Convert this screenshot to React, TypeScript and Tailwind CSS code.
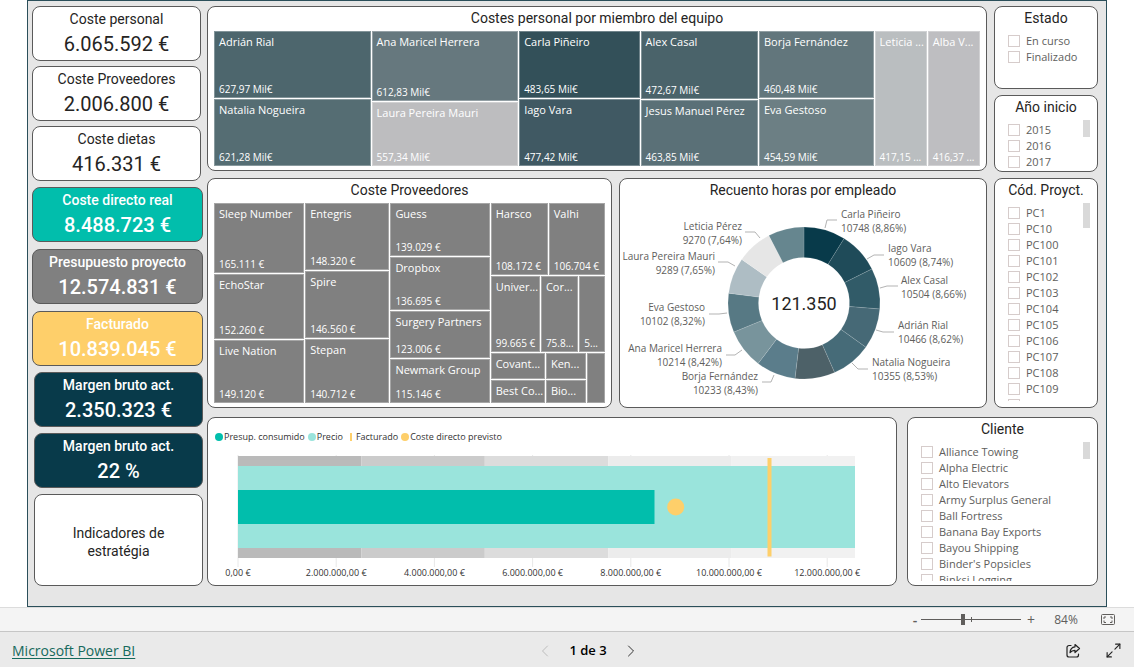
import type { ReactNode } from 'react';
import clsx from 'clsx';
import { ChevronLeft, ChevronRight, Maximize2 } from 'lucide-react';

interface Leaf {
  name?: string;
  label?: string;
  value: number;
  color?: string;
}

interface Branch {
  dir: 'row' | 'col';
  items: TreeNode[];
}

type TreeNode = Leaf | Branch;

const personal: Branch = {
  dir: 'row',
  items: [
    {
      dir: 'col',
      items: [
        { name: 'Adrián Rial', label: '627,97 Mil€', value: 627.97, color: '#4d666d' },
        { name: 'Natalia Nogueira', label: '621,28 Mil€', value: 621.28, color: '#556d73' },
      ],
    },
    {
      dir: 'col',
      items: [
        { name: 'Ana Maricel Herrera', label: '612,83 Mil€', value: 612.83, color: '#66787e' },
        { name: 'Laura Pereira Mauri', label: '557,34 Mil€', value: 557.34, color: '#bdbdbf' },
      ],
    },
    {
      dir: 'col',
      items: [
        { name: 'Carla Piñeiro', label: '483,65 Mil€', value: 483.65, color: '#335059' },
        { name: 'Iago Vara', label: '477,42 Mil€', value: 477.42, color: '#405963' },
      ],
    },
    {
      dir: 'col',
      items: [
        { name: 'Alex Casal', label: '472,67 Mil€', value: 472.67, color: '#4a636a' },
        { name: 'Jesus Manuel Pérez', label: '463,85 Mil€', value: 463.85, color: '#5a7077' },
      ],
    },
    {
      dir: 'col',
      items: [
        { name: 'Borja Fernández', label: '460,48 Mil€', value: 460.48, color: '#62767c' },
        { name: 'Eva Gestoso', label: '454,59 Mil€', value: 454.59, color: '#6c7f84' },
      ],
    },
    { name: 'Leticia ...', label: '417,15 ...', value: 417.15, color: '#babec0' },
    { name: 'Alba V...', label: '416,37 ...', value: 416.37, color: '#bebec1' },
  ],
};

const proveedores: Branch = {
  dir: 'row',
  items: [
    {
      dir: 'col',
      items: [
        { name: 'Sleep Number', label: '165.111 €', value: 165.1 },
        { name: 'EchoStar', label: '152.260 €', value: 152.3 },
        { name: 'Live Nation', label: '149.120 €', value: 149.1 },
      ],
    },
    {
      dir: 'col',
      items: [
        { name: 'Entegris', label: '148.320 €', value: 148.3 },
        { name: 'Spire', label: '146.560 €', value: 146.6 },
        { name: 'Stepan', label: '140.712 €', value: 140.7 },
      ],
    },
    {
      dir: 'col',
      items: [
        { name: 'Guess', label: '139.029 €', value: 139 },
        { name: 'Dropbox', label: '136.695 €', value: 136.7 },
        { name: 'Surgery Partners', label: '123.006 €', value: 123 },
        { name: 'Newmark Group', label: '115.146 €', value: 115.1 },
      ],
    },
    {
      dir: 'col',
      items: [
        {
          dir: 'row',
          items: [
            { name: 'Harsco', label: '108.172 €', value: 108.2 },
            { name: 'Valhi', label: '106.704 €', value: 106.7 },
          ],
        },
        {
          dir: 'row',
          items: [
            { name: 'Univer...', label: '99.665 €', value: 99.7 },
            { name: 'Cor...', label: '75.8...', value: 75.8 },
            { label: '5...', value: 52 },
          ],
        },
        {
          dir: 'row',
          items: [
            {
              dir: 'col',
              items: [
                { name: 'Covant...', value: 38 },
                { name: 'Best Co...', value: 34 },
              ],
            },
            {
              dir: 'col',
              items: [
                { name: 'Ken...', value: 28 },
                { name: 'Bio...', value: 25 },
              ],
            },
            { value: 24 },
          ],
        },
      ],
    },
  ],
};

const plainCards = [
  { title: 'Coste personal', value: '6.065.592 €' },
  { title: 'Coste Proveedores', value: '2.006.800 €' },
  { title: 'Coste dietas', value: '416.331 €' },
];

const projectCards = [
  { title: 'Coste directo real', value: '8.488.723 €', tone: 'bg-[#01beac] text-white' },
  { title: 'Presupuesto proyecto', value: '12.574.831 €', tone: 'bg-[#808080] text-white' },
  { title: 'Facturado', value: '10.839.045 €', tone: 'bg-[#fecf6a] text-white' },
];

const marginCards = [
  { title: 'Margen bruto act.', value: '2.350.323 €', tone: 'bg-[#083a4a] text-white' },
  { title: 'Margen bruto act.', value: '22 %', tone: 'bg-[#083a4a] text-white' },
];

const slices = [
  { value: 10748, color: '#083a4a' },
  { value: 10609, color: '#1f4b59' },
  { value: 10504, color: '#315b68' },
  { value: 10466, color: '#466976' },
  { value: 10355, color: '#466b78' },
  { value: 10290, color: '#4d6168' },
  { value: 10233, color: '#5b7d8b' },
  { value: 10214, color: '#78949c' },
  { value: 10102, color: '#577984' },
  { value: 9289, color: '#aebdc4' },
  { value: 9270, color: '#e6e6e6' },
  { value: 9270, color: '#66868f' },
];

interface Callout {
  name: string;
  detail: string;
  x: number;
  y: number;
  end?: boolean;
  line: string;
}

const callouts: Callout[] = [
  { name: 'Carla Piñeiro', detail: '10748 (8,86%)', x: 221, y: 15, line: '205,25 207,17 217,17' },
  { name: 'Iago Vara', detail: '10609 (8,74%)', x: 268, y: 49, line: '247,56 254,52 264,52' },
  { name: 'Alex Casal', detail: '10504 (8,66%)', x: 281, y: 81, line: '260,85 267,83 278,83' },
  { name: 'Adrián Rial', detail: '10466 (8,62%)', x: 278, y: 126, line: '256,127 263,129 274,129' },
  { name: 'Natalia Nogueira', detail: '10355 (8,53%)', x: 252, y: 163, line: '232,160 238,166 248,166' },
  { name: 'Borja Fernández', detail: '10233 (8,43%)', x: 138, y: 177, end: true, line: '142,179 151,179 154,172' },
  { name: 'Ana Maricel Herrera', detail: '10214 (8,42%)', x: 102, y: 149, end: true, line: '106,152 115,152 122,147' },
  { name: 'Eva Gestoso', detail: '10102 (8,32%)', x: 85, y: 108, end: true, line: '89,111 99,111 107,110' },
  { name: 'Laura Pereira Mauri', detail: '9289 (7,65%)', x: 95, y: 57, end: true, line: '98,59 108,59 115,63' },
  { name: 'Leticia Pérez', detail: '9270 (7,64%)', x: 122, y: 27, end: true, line: '125,29 135,29 140,35' },
];

const bands = ['#bababa', '#cbcbcb', '#dcdcdc', '#ececec', '#f1f1f1'];

const ticks = [
  '0,00 €',
  '2.000.000,00 €',
  '4.000.000,00 €',
  '6.000.000,00 €',
  '8.000.000,00 €',
  '10.000.000,00 €',
  '12.000.000,00 €',
];

const estados = ['En curso', 'Finalizado'];
const anios = ['2015', '2016', '2017'];
const proyectos = [
  'PC1', 'PC10', 'PC100', 'PC101', 'PC102', 'PC103', 'PC104',
  'PC105', 'PC106', 'PC107', 'PC108', 'PC109', 'PC11',
];
const clientes = [
  'Alliance Towing',
  'Alpha Electric',
  'Alto Elevators',
  'Army Surplus General',
  'Ball Fortress',
  'Banana Bay Exports',
  'Bayou Shipping',
  "Binder's Popsicles",
  'Binksi Logging',
];

function total(node: TreeNode): number {
  return 'items' in node ? node.items.reduce((sum, n) => sum + total(n), 0) : node.value;
}

function Treemap({ node }: { node: TreeNode }) {
  const style = { flexGrow: total(node) };
  if ('items' in node) {
    return (
      <div
        className={clsx('flex min-h-0 min-w-0 basis-0 gap-px', node.dir === 'col' && 'flex-col')}
        style={style}
      >
        {node.items.map((n, i) => (
          <Treemap key={i} node={n} />
        ))}
      </div>
    );
  }
  // padding sits on the inner box so that it does not add to the flex share
  return (
    <div className="flex min-h-0 min-w-0 basis-0 bg-[#808080]" style={{ ...style, backgroundColor: node.color }}>
      <div className="flex min-w-0 flex-1 flex-col justify-between border border-white/30 pl-1 whitespace-nowrap text-white">
        {node.name ? <p className="pt-0.5 text-[11px] leading-4">{node.name}</p> : <span />}
        {node.label && <p className="text-[10px] leading-4">{node.label}</p>}
      </div>
    </div>
  );
}

function Panel({ title, className, children }: { title?: string; className?: string; children: ReactNode }) {
  return (
    <section className={clsx('flex min-w-0 flex-col rounded-lg border border-[#5a5a5a] bg-white', className)}>
      {title && (
        <h2 className="pb-0.5 text-center font-['Roboto',sans-serif] text-sm leading-[22px] text-[#252423]">
          {title}
        </h2>
      )}
      {children}
    </section>
  );
}

function Card({ title, value, tone }: { title: string; value: string; tone?: string }) {
  return (
    <div
      className={clsx(
        "rounded-lg border border-[#5a5a5a] pt-0.5 text-center font-['Roboto',sans-serif]",
        tone ? [tone, 'font-medium'] : 'bg-white text-[#252423]',
      )}
    >
      <p className="text-sm leading-5">{title}</p>
      <p className="text-xl leading-[31px]">{value}</p>
    </div>
  );
}

function Slicer({ title, options, list, thumb }: { title: string; options: string[]; list: string; thumb?: string }) {
  return (
    <Panel title={title}>
      <div className="flex pr-[7px] pl-[13px]">
        <ul className={clsx('min-w-0 flex-1 overflow-hidden pt-0.5', list)}>
          {options.map((o) => (
            <li key={o}>
              <label className="flex h-4 items-center gap-1.5 text-[11px] whitespace-nowrap text-[#605e5c]">
                <input
                  type="checkbox"
                  className="size-3 shrink-0 appearance-none border border-[#d6cccb] bg-white checked:bg-[#605e5c]"
                />
                {o}
              </label>
            </li>
          ))}
        </ul>
        {thumb && <div className={clsx('w-[7px] bg-[#d9d9d9]', thumb)} />}
      </div>
    </Panel>
  );
}

function Donut() {
  const cx = 184;
  const cy = 100;
  const sum = slices.reduce((s, d) => s + d.value, 0);
  const point = (r: number, a: number) => `${cx + r * Math.sin(a)} ${cy - r * Math.cos(a)}`;
  let angle = 0;

  return (
    <svg viewBox="0 0 366 200" className="w-full font-['Open_Sans',sans-serif]">
      {slices.map((s, i) => {
        const from = angle;
        const to = from + (s.value / sum) * Math.PI * 2;
        angle = to;
        return (
          <path
            key={i}
            d={`M${point(76, from)} A76 76 0 0 1 ${point(76, to)} L${point(45.5, to)} A45.5 45.5 0 0 0 ${point(45.5, from)}Z`}
            fill={s.color}
            stroke="#fff"
            strokeOpacity=".25"
            strokeWidth=".5"
          />
        );
      })}
      {callouts.map((c) => (
        <g key={c.name}>
          <polyline points={c.line} fill="none" stroke="#b3b3b3" />
          <text fontSize="10" fill="#605e5c" textAnchor={c.end ? 'end' : 'start'}>
            <tspan x={c.x} y={c.y}>{c.name}</tspan>
            <tspan x={c.x} y={c.y + 14}>{c.detail}</tspan>
          </text>
        </g>
      ))}
      <text x={cx} y={cy + 7} textAnchor="middle" className="fill-[#252423] font-['Roboto',sans-serif] text-[18px]">
        121.350
      </text>
    </svg>
  );
}

function BulletChart() {
  return (
    <svg viewBox="0 0 688 138" className="w-full font-['Open_Sans',sans-serif]">
      {ticks.map((t, i) => (
        <g key={t}>
          <path d={`M${30 + i * 98.2} 9V121`} stroke="#e8e8e8" />
          <text x={30 + i * 98.2} y="130" textAnchor="middle" fontSize="9" fill="#333">
            {t}
          </text>
        </g>
      ))}
      {bands.map((color, i) => (
        <rect key={color} x={30 + i * 123.4} y="10" width="123.4" height="102" fill={color} />
      ))}
      <rect x="30" y="20" width="617" height="82" fill="#9ae4dc" />
      <rect x="30" y="44" width="416.5" height="34" fill="#01beac" />
      <circle cx="467.7" cy="61" r="8.5" fill="#fecf6a" />
      <rect x="559.5" y="12" width="4" height="98.5" fill="#fecf6a" />
    </svg>
  );
}

function Legend() {
  return (
    <ul className="flex items-center gap-[3px] px-[7px] pt-[11px] pb-px text-[9px] leading-4 text-[#333]">
      <li className="flex items-center gap-px">
        <span className="size-2 rounded-full bg-[#01beac]" />
        Presup. consumido
      </li>
      <li className="flex items-center gap-px">
        <span className="size-2 rounded-full bg-[#9ae4dc]" />
        Precio
      </li>
      <li className="flex items-center gap-1 pl-1">
        <span className="h-2 w-0.5 bg-[#fecf6a]" />
        Facturado
      </li>
      <li className="flex items-center gap-px">
        <span className="size-2 rounded-full bg-[#fecf6a]" />
        Coste directo previsto
      </li>
    </ul>
  );
}

function Sidebar() {
  return (
    <aside className="flex w-[171px] shrink-0 flex-col gap-1.5">
      <div className="flex flex-col gap-[5px] pr-0.5">
        {plainCards.map((c) => (
          <Card key={c.title} {...c} />
        ))}
      </div>
      <div className="flex flex-col gap-[7px]">
        {projectCards.map((c) => (
          <Card key={c.title} {...c} />
        ))}
      </div>
      <div className="flex flex-1 flex-col gap-1.5 pl-0.5">
        {marginCards.map((c) => (
          <Card key={c.value} {...c} />
        ))}
        <button
          type="button"
          className="flex-1 rounded-lg border border-[#5a5a5a] bg-white px-6 pt-1 font-['Roboto',sans-serif] text-sm leading-[18px] text-[#252423]"
        >
          Indicadores de estratégia
        </button>
      </div>
    </aside>
  );
}

function ZoomBar() {
  return (
    <div className="flex h-6 items-center justify-end border-t border-[#dcdcdc] bg-[#f4f4f4] pr-[19px] text-[#605e5c]">
      <button type="button" aria-label="Alejar" className="w-3 text-sm leading-none font-semibold">
        -
      </button>
      <div className="relative flex w-[100px] items-center">
        <input
          type="range"
          aria-label="Zoom"
          min={0}
          max={200}
          defaultValue={84}
          className="h-px w-full appearance-none bg-[#605e5c] [&::-webkit-slider-thumb]:h-[11px] [&::-webkit-slider-thumb]:w-1 [&::-webkit-slider-thumb]:appearance-none [&::-webkit-slider-thumb]:bg-[#605e5c]"
        />
        <span className="absolute left-1/2 h-[5px] w-px bg-[#605e5c]" />
      </div>
      <button type="button" aria-label="Acercar" className="w-5 text-sm leading-none">
        +
      </button>
      <span className="w-[50px] text-center text-xs">84%</span>
      <button type="button" aria-label="Ajustar a la página" className="ml-2.5">
        <svg viewBox="0 0 14 11" className="h-[11px] w-3.5" fill="none" stroke="currentColor">
          <rect x=".5" y=".5" width="13" height="10" rx="1" />
          <path d="M3 5V3h2M9 3h2v2M11 6.500v2H9M5 8.500H3v-2" />
        </svg>
      </button>
    </div>
  );
}

function Footer() {
  return (
    <footer className="flex flex-1 items-center border-t border-[#c6c6c6] bg-[#eaeaea] px-3 pt-0.5 text-sm">
      <div className="flex-1">
        <a href="#" className="text-[#15695c] underline underline-offset-2">
          Microsoft Power BI
        </a>
      </div>
      <nav className="flex items-center gap-3.5 pl-[42px]">
        <button type="button" aria-label="Página anterior" disabled className="text-[#bdbdbd]">
          <ChevronLeft size={20} strokeWidth={1.2} />
        </button>
        <span className="text-[13px] font-semibold text-black">1 de 3</span>
        <button type="button" aria-label="Página siguiente" className="text-[#333]">
          <ChevronRight size={20} strokeWidth={1.2} />
        </button>
      </nav>
      <div className="flex flex-1 items-center justify-end gap-6 text-[#222]">
        <button type="button" aria-label="Compartir">
          <svg
            viewBox="0 0 16 16"
            className="size-4"
            fill="none"
            stroke="currentColor"
            strokeWidth="1.2"
            strokeLinejoin="round"
            strokeLinecap="round"
          >
            <path d="M6 2.500H4A2 2 0 0 0 2 4.500V12a2 2 0 0 0 2 2h7.500a2 2 0 0 0 2-2v-1" />
            <path d="M10 1.500l4.500 4-4.500 4V7.300c-2.300 0-3.800.7-5 2.400.2-3.500 2-5.600 5-5.900V1.500z" />
          </svg>
        </button>
        <button type="button" aria-label="Pantalla completa">
          <Maximize2 size={17} strokeWidth={1.6} />
        </button>
      </div>
    </footer>
  );
}

export default function App() {
  return (
    <div className="flex min-h-screen flex-col bg-white font-['Open_Sans',sans-serif]">
      <div className="px-[27px]">
        <main className="flex gap-1 border border-[#2b4f5a] bg-[#e6e6e6] pt-[5px] pr-2 pb-5 pl-1">
          <Sidebar />

          <div className="flex min-w-0 flex-1 flex-col gap-[9px]">
            <div className="flex gap-[7px]">
              <div className="flex min-w-0 flex-1 flex-col gap-[7px]">
                <Panel title="Costes personal por miembro del equipo" className="px-1.5 pb-1">
                  <div className="flex h-[135px]">
                    <Treemap node={personal} />
                  </div>
                </Panel>
                <div className="grid flex-1 grid-cols-[405fr_368fr] gap-[7px]">
                  <Panel title="Coste Proveedores" className="px-1.5 pb-1">
                    <div className="flex min-h-[199px] flex-1">
                      <Treemap node={proveedores} />
                    </div>
                  </Panel>
                  <Panel title="Recuento horas por empleado">
                    <Donut />
                  </Panel>
                </div>
              </div>

              <div className="flex w-[104px] shrink-0 flex-col gap-1.5">
                <Slicer title="Estado" options={estados} list="h-[57px]" />
                <Slicer title="Año inicio" options={anios} list="h-[51px]" thumb="h-[17px]" />
                <Slicer title="Cód. Proyct." options={proyectos} list="mb-1.5 h-[198px]" thumb="h-[25px]" />
              </div>
            </div>

            <div className="flex gap-2.5">
              <Panel className="flex-1">
                <Legend />
                <BulletChart />
              </Panel>
              <div className="w-[191px] shrink-0">
                <Slicer title="Cliente" options={clientes} list="mb-1 h-[139px]" thumb="h-[17px]" />
              </div>
            </div>
          </div>
        </main>
      </div>

      <ZoomBar />
      <Footer />
    </div>
  );
}
